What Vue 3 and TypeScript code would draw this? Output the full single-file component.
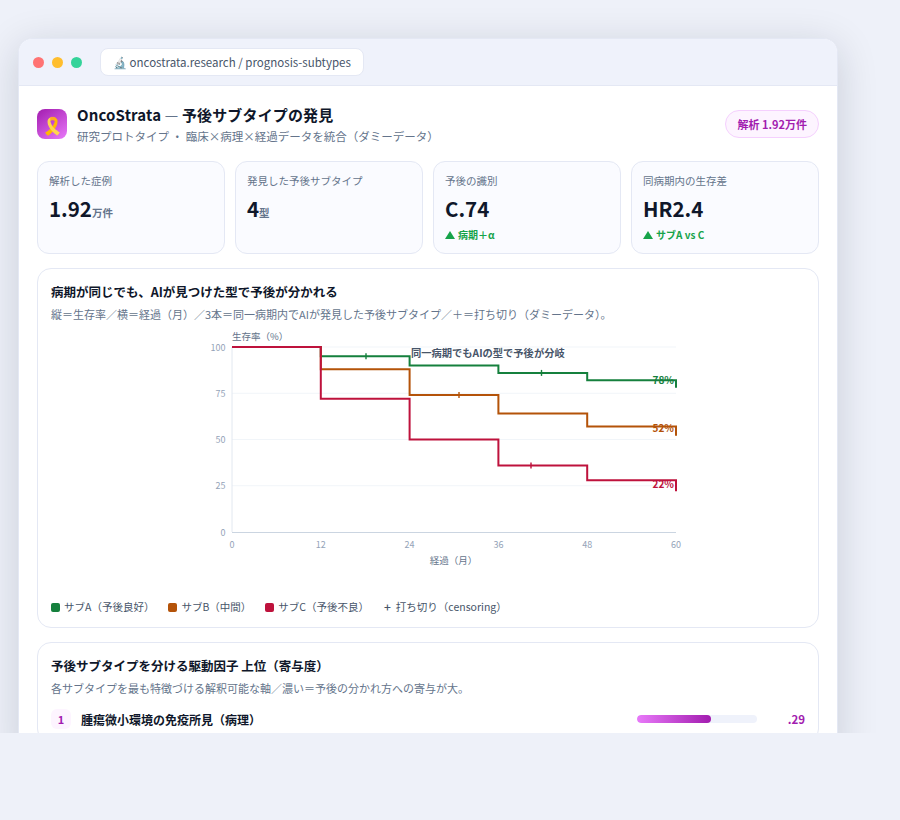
<script setup lang="ts">
const kpis = [
  { label: '解析した症例', value: '1.92', unit: '万件', delta: '' },
  { label: '発見した予後サブタイプ', value: '4', unit: '型', delta: '' },
  { label: '予後の識別', value: 'C.74', unit: '', delta: '病期＋α' },
  { label: '同病期内の生存差', value: 'HR2.4', unit: '', delta: 'サブA vs C' },
]
const X = (m: number) => 232 + (m / 60) * 444
const Y = (p: number) => 532 - (p / 100) * 185
function km(steps: number[]): string {
  let d = `M${X(0)} ${Y(100)}`
  let prev = 100
  const months = [12, 24, 36, 48, 60]
  steps.forEach((p, i) => {
    d += ` L${X(months[i]).toFixed(1)} ${Y(prev).toFixed(1)} L${X(months[i]).toFixed(1)} ${Y(p).toFixed(1)}`
    prev = p
  })
  return d
}
const series = [
  { name: 'サブA（予後良好）', color: '#15803d', steps: [95, 90, 86, 82, 78], end: '78%', labelY: 384, tick: [366, 95] },
  { name: 'サブB（中間）', color: '#b45309', steps: [88, 74, 64, 57, 52], end: '52%', labelY: 432, tick: [459, 74] },
  { name: 'サブC（予後不良）', color: '#be123c', steps: [72, 50, 36, 28, 22], end: '22%', labelY: 488, tick: [531, 36] },
].map((s) => ({ ...s, d: km(s.steps) }))
const green = { x: 541.5, y: Y(86) }
const yTicks = [100, 75, 50, 25, 0]
const xTicks = [0, 12, 24, 36, 48, 60]
</script>

<template>
  <div class="stage">
    <div class="window">
      <div class="chrome">
        <span class="dot red"></span><span class="dot amber"></span><span class="dot mint"></span>
        <div class="url">🔬 oncostrata.research / prognosis-subtypes</div>
      </div>
      <div class="content">
        <header class="head">
          <div class="logo">🎗️</div>
          <div class="titles">
            <h1>OncoStrata <span class="dash">—</span> 予後サブタイプの発見</h1>
            <p>研究プロトタイプ ・ 臨床×病理×経過データを統合（ダミーデータ）</p>
          </div>
          <div class="pill">解析 1.92万件</div>
        </header>

        <section class="kpis">
          <div v-for="k in kpis" :key="k.label" class="kpi">
            <div class="k-label">{{ k.label }}</div>
            <div class="k-value">{{ k.value }}<small v-if="k.unit">{{ k.unit }}</small></div>
            <div v-if="k.delta" class="k-delta"><i class="tri"></i>{{ k.delta }}</div>
          </div>
        </section>

        <section class="card chart-card">
          <h2>病期が同じでも、AIが見つけた型で予後が分かれる</h2>
          <p class="sub">縦＝生存率／横＝経過（月）／3本＝同一病期内でAIが発見した予後サブタイプ／＋＝打ち切り（ダミーデータ）。</p>
          <svg class="chart" viewBox="168 325 520 250" width="520" height="250">
            <line v-for="t in yTicks.slice(0, 4)" :key="t" x1="232" x2="676" :y1="Y(t)" :y2="Y(t)" class="grid" />
            <line x1="232" x2="232" y1="347" y2="532" class="axis-y" />
            <line x1="232" x2="676" y1="532.5" y2="532.5" class="axis-x" />
            <text v-for="t in yTicks" :key="'y' + t" x="225.5" :y="Y(t) + 3.5" text-anchor="end" class="tick">{{ t }}</text>
            <text v-for="t in xTicks" :key="'x' + t" :x="X(t)" y="548" text-anchor="middle" class="tick">{{ t }}</text>
            <text x="232" y="339.5" class="axis-title">生存率（%）</text>
            <text x="453.5" y="564" text-anchor="middle" class="axis-title">経過（月）</text>
            <g v-for="s in series" :key="s.name">
              <path :d="s.d" fill="none" :stroke="s.color" stroke-width="2" />
              <line :x1="s.tick[0]" :x2="s.tick[0]" :y1="Y(s.tick[1]) - 3" :y2="Y(s.tick[1]) + 3" :stroke="s.color" stroke-width="1.4" />
              <text x="674" :y="s.labelY" text-anchor="end" class="end" :fill="s.color">{{ s.end }}</text>
            </g>
            <line :x1="green.x" :x2="green.x" :y1="green.y - 3" :y2="green.y + 3" stroke="#15803d" stroke-width="1.4" />
            <text x="411" y="357" class="note">同一病期でもAIの型で予後が分岐</text>
          </svg>
          <div class="legend">
            <span v-for="s in series" :key="s.name" class="lg"><i :style="{ background: s.color }"></i>{{ s.name }}</span>
            <span class="lg"><b class="plus">+</b>打ち切り（censoring）</span>
          </div>
        </section>

        <section class="card driver-card">
          <h2>予後サブタイプを分ける駆動因子 上位（寄与度）</h2>
          <p class="sub">各サブタイプを最も特徴づける解釈可能な軸／濃い＝予後の分かれ方への寄与が大。</p>
          <div class="row">
            <span class="rank">1</span>
            <span class="r-name">腫瘍微小環境の免疫所見（病理）</span>
            <span class="track"><span class="fill"></span></span>
            <span class="r-val">.29</span>
          </div>
        </section>
      </div>
    </div>
  </div>
</template>

<style>
html, body { margin: 0; background: #eef1f9; }
</style>

<style scoped>
.stage {
  height: 733px;
  overflow: hidden;
  box-sizing: border-box;
  padding: 38px 62px 0 18px;
  background: #eef1f9;
  font-family: "Noto Sans CJK JP", "Noto Sans", sans-serif;
}
.window {
  width: 820px;
  box-sizing: border-box;
  background: #fff;
  border: 1px solid #e4e8f4;
  border-radius: 14px;
  box-shadow: 0 8px 40px rgba(15, 23, 42, 0.16);
}
.chrome {
  height: 46px;
  display: flex;
  align-items: center;
  gap: 7px;
  padding: 0 14px;
  background: #eff2fb;
  border-bottom: 1px solid #e4e8f4;
  border-radius: 13px 13px 0 0;
}
.dot { width: 11px; height: 11px; border-radius: 50%; margin-right: 1px; }
.red { background: #ff7373; }
.amber { background: #ffbe2e; }
.mint { background: #34d399; }
.url {
  margin-left: 10px;
  height: 26px;
  line-height: 26px;
  padding: 0 12px;
  background: #fff;
  border: 1px solid #e4e8f4;
  border-radius: 8px;
  font-size: 11.5px;
  color: #475569;
}
.content { padding: 18px; }
.head { display: flex; align-items: flex-start; gap: 10px; }
.logo {
  width: 30px;
  height: 30px;
  margin-top: 5px;
  border-radius: 8px;
  background: linear-gradient(145deg, #a21caf, #e879f9);
  display: flex;
  align-items: center;
  justify-content: center;
  font-size: 17px;
  line-height: 1;
}
.titles { flex: 1; }
h1 { margin: 0; font-size: 15px; line-height: 22px; font-weight: 700; color: #0f172a; letter-spacing: 0.01em; }
.dash { font-weight: 400; color: #64748b; }
.titles p { margin: 1px 0 0; font-size: 11.5px; line-height: 18px; color: #64748b; }
.pill {
  box-sizing: border-box;
  height: 28px;
  margin-top: 6px;
  line-height: 27px;
  padding: 0 11px;
  border: 1px solid #f5d0fe;
  background: #fdf4ff;
  color: #a21caf;
  border-radius: 14px;
  font-size: 11px;
  font-weight: 700;
}
.kpis { display: grid; grid-template-columns: repeat(4, 1fr); gap: 10px; margin-top: 16px; }
.kpi {
  height: 93px;
  box-sizing: border-box;
  padding: 11px;
  background: #fafbff;
  border: 1px solid #e4e8f4;
  border-radius: 12px;
}
.k-label { font-size: 10.5px; line-height: 16px; color: #64748b; }
.k-value { font-size: 20.5px; line-height: 28px; margin-top: 5px; font-weight: 700; color: #0f172a; }
.k-value small { font-size: 10.5px; font-weight: 700; color: #64748b; }
.k-delta { display: flex; align-items: center; gap: 3px; font-size: 10px; line-height: 16px; margin-top: 5px; font-weight: 700; color: #16a34a; }
.tri { width: 0; height: 0; border-left: 5px solid transparent; border-right: 5px solid transparent; border-bottom: 8px solid #16a34a; }
.card {
  margin-top: 14px;
  box-sizing: border-box;
  border: 1px solid #e4e8f4;
  border-radius: 14px;
  padding: 13px;
  background: #fff;
}
.chart-card { height: 360px; }
h2 { margin: 0; font-size: 12.5px; line-height: 20px; font-weight: 700; color: #0f172a; }
.sub { margin: 3px 0 0; font-size: 11px; line-height: 18px; color: #64748b; }
.chart { display: block; margin: 2px auto 0; }
.grid { stroke: #f1f5f9; stroke-width: 1; }
.axis-y { stroke: #e2e8f0; stroke-width: 1; }
.axis-x { stroke: #cbd5e1; stroke-width: 1; }
.tick { font-size: 9px; fill: #94a3b8; }
.axis-title { font-size: 9.5px; fill: #64748b; }
.end { font-size: 10px; font-weight: 700; }
.note { font-size: 10.27px; font-weight: 700; fill: #475569; }
.legend { display: flex; gap: 14px; margin-top: 24px; font-size: 10.5px; line-height: 16px; color: #475569; }
.lg { display: inline-flex; align-items: center; gap: 4px; }
.lg i { width: 9px; height: 9px; border-radius: 2px; }
.plus { font-weight: 500; font-size: 12px; margin: 0 1px 0 1px; }
.driver-card .row { display: flex; align-items: center; margin-top: 12px; height: 20px; }
.rank {
  width: 20px;
  height: 20px;
  line-height: 20px;
  text-align: center;
  border-radius: 6px;
  background: #fdf4ff;
  color: #a21caf;
  font-size: 11px;
  font-weight: 700;
}
.r-name { flex: 1; margin-left: 10px; font-size: 12px; font-weight: 700; color: #0f172a; }
.track { width: 120px; height: 8px; border-radius: 4px; background: #eff2fb; display: block; overflow: hidden; }
.fill { display: block; width: 61.5%; height: 100%; border-radius: 4px; background: linear-gradient(90deg, #e879f9, #a21caf); }
.r-val { width: 48px; text-align: right; font-size: 11.5px; font-weight: 700; color: #a21caf; }
</style>
